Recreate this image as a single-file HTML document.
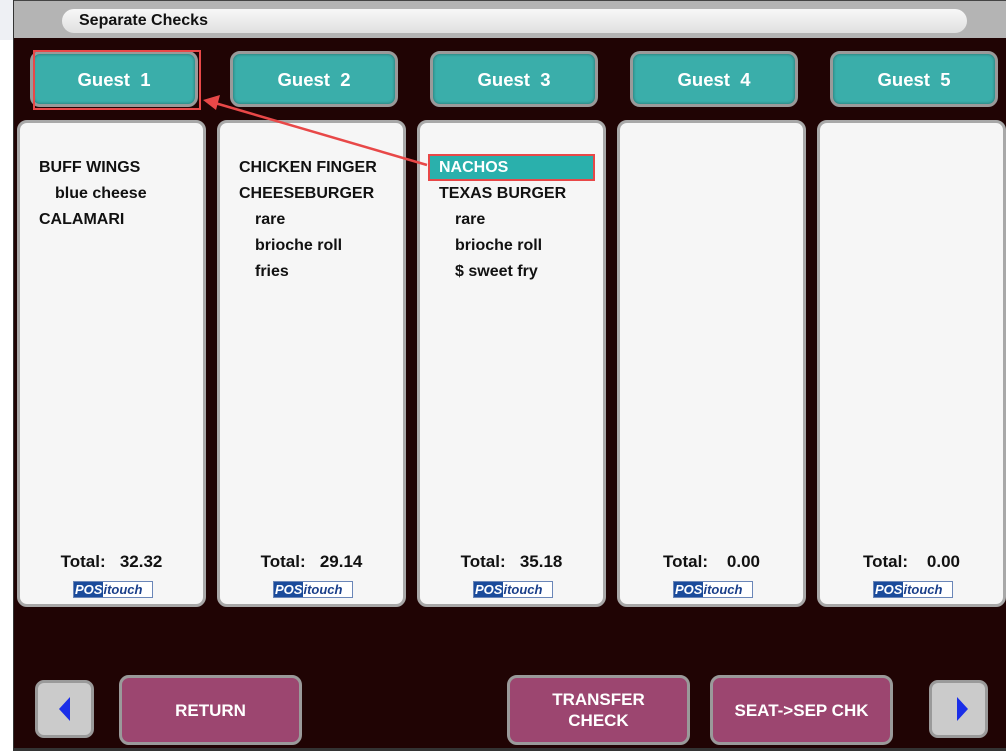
<!DOCTYPE html>
<html><head><style>
body{margin:0;width:1006px;height:751px;overflow:hidden;background:#fff;font-family:"Liberation Sans",Arial,sans-serif;position:relative}
.abs{position:absolute}
.top{left:14px;top:0;width:992px;height:38px;background:#b4b4b4;border-top:1px solid #444}
.pill{left:62px;top:9px;width:905px;height:24px;border-radius:12px;background:linear-gradient(#f8f8f8,#e0e0e0);font-size:16px;font-weight:bold;color:#111;line-height:24px;text-indent:17px}
.dark{left:14px;top:38px;width:992px;height:710px;background:#200404}
.g{width:162px;height:50px;border:3px solid #9a9a9a;border-radius:10px;background:#3aaeaa;color:#fff;font-weight:bold;font-size:18.5px;text-align:center;line-height:52px;top:51px;box-shadow:inset 0 0 3px rgba(0,0,0,.4)}
.c{top:120px;width:183px;height:481px;border:3px solid #a8a8a8;border-radius:10px;background:#f6f6f6}
.c .t{position:absolute;left:19px;font-size:16px;font-weight:bold;color:#111}
.tot{position:absolute;top:429px;font-size:17px;font-weight:bold;color:#111;width:100%;text-align:center}
.logo{position:absolute;top:458px;left:53px;width:78px;height:15px;border:1px solid #6a86b8;font-size:13px;font-weight:bold;font-style:italic;color:#1a3f8a;line-height:15px;background:#fff}
.logo b{background:#1a4b9b;color:#fff;padding:0 1px}
.btn{border:3px solid #9a9a9a;border-radius:10px;background:#9c4670;color:#fff;font-weight:bold;font-size:17px;text-align:center;display:flex;align-items:center;justify-content:center;line-height:21px}
.nav{border:3px solid #9a9a9a;border-radius:9px;background:#cbcbcb}
</style></head><body>
<div class="abs" style="left:0;top:0;width:13px;height:751px;background:#fff"></div>
<div class="abs" style="left:0;top:0;width:13px;height:40px;background:#eef0f4"></div>
<div class="abs" style="left:13px;top:0;width:1px;height:751px;background:#333"></div>
<div class="abs top"></div>
<div class="abs pill">Separate Checks</div>
<div class="abs dark"></div>
<div class="abs" style="left:13px;top:748px;width:993px;height:3px;background:#333"></div>

<div class="abs g" style="left:30px">Guest&nbsp; 1</div>
<div class="abs g" style="left:230px">Guest&nbsp; 2</div>
<div class="abs g" style="left:430px">Guest&nbsp; 3</div>
<div class="abs g" style="left:630px">Guest&nbsp; 4</div>
<div class="abs g" style="left:830px">Guest&nbsp; 5</div>
<div class="abs" style="left:33px;top:50px;width:164px;height:56px;border:2px solid #e84848"></div>

<div class="abs c" style="left:17px">
<div class="t" style="top:36px">BUFF WINGS</div>
<div class="t" style="top:62px;left:35px">blue cheese</div>
<div class="t" style="top:88px">CALAMARI</div>
<div class="tot">Total:&nbsp;&nbsp; 32.32</div><div class="logo"><b>POS</b>itouch</div></div>
<div class="abs c" style="left:217px">
<div class="t" style="top:36px">CHICKEN FINGER</div>
<div class="t" style="top:62px">CHEESEBURGER</div>
<div class="t" style="top:88px;left:35px">rare</div>
<div class="t" style="top:114px;left:35px">brioche roll</div>
<div class="t" style="top:140px;left:35px">fries</div>
<div class="tot">Total:&nbsp;&nbsp; 29.14</div><div class="logo"><b>POS</b>itouch</div></div>
<div class="abs c" style="left:417px">
<div class="abs" style="left:8px;top:31px;width:167px;height:27px;background:#2ab0ac;border:2px solid #e84848;box-sizing:border-box"></div>
<div class="t" style="top:36px;color:#fff">NACHOS</div>
<div class="t" style="top:62px">TEXAS BURGER</div>
<div class="t" style="top:88px;left:35px">rare</div>
<div class="t" style="top:114px;left:35px">brioche roll</div>
<div class="t" style="top:140px;left:35px">$ sweet fry</div>
<div class="tot">Total:&nbsp;&nbsp; 35.18</div><div class="logo"><b>POS</b>itouch</div></div>
<div class="abs c" style="left:617px"><div class="tot">Total:&nbsp;&nbsp;&nbsp; 0.00</div><div class="logo"><b>POS</b>itouch</div></div>
<div class="abs c" style="left:817px"><div class="tot">Total:&nbsp;&nbsp;&nbsp; 0.00</div><div class="logo"><b>POS</b>itouch</div></div>

<svg class="abs" style="left:0;top:0" width="1006" height="751">
<line x1="427" y1="165" x2="215" y2="103" stroke="#e84848" stroke-width="2.5"/>
<polygon points="203,100 220,95 216,110" fill="#e84848"/>
</svg>

<div class="abs nav" style="left:35px;top:680px;width:53px;height:52px"><svg width="53" height="52"><polygon points="21,26 32,14 32,38" fill="#1a2ee8"/></svg></div>
<div class="abs btn" style="left:119px;top:675px;width:177px;height:64px">RETURN</div>
<div class="abs btn" style="left:507px;top:675px;width:177px;height:64px">TRANSFER<br>CHECK</div>
<div class="abs btn" style="left:710px;top:675px;width:177px;height:64px">SEAT-&gt;SEP CHK</div>
<div class="abs nav" style="left:929px;top:680px;width:53px;height:52px"><svg width="53" height="52"><polygon points="25,14 36,26 25,38" fill="#1a2ee8"/></svg></div>
</body></html>
